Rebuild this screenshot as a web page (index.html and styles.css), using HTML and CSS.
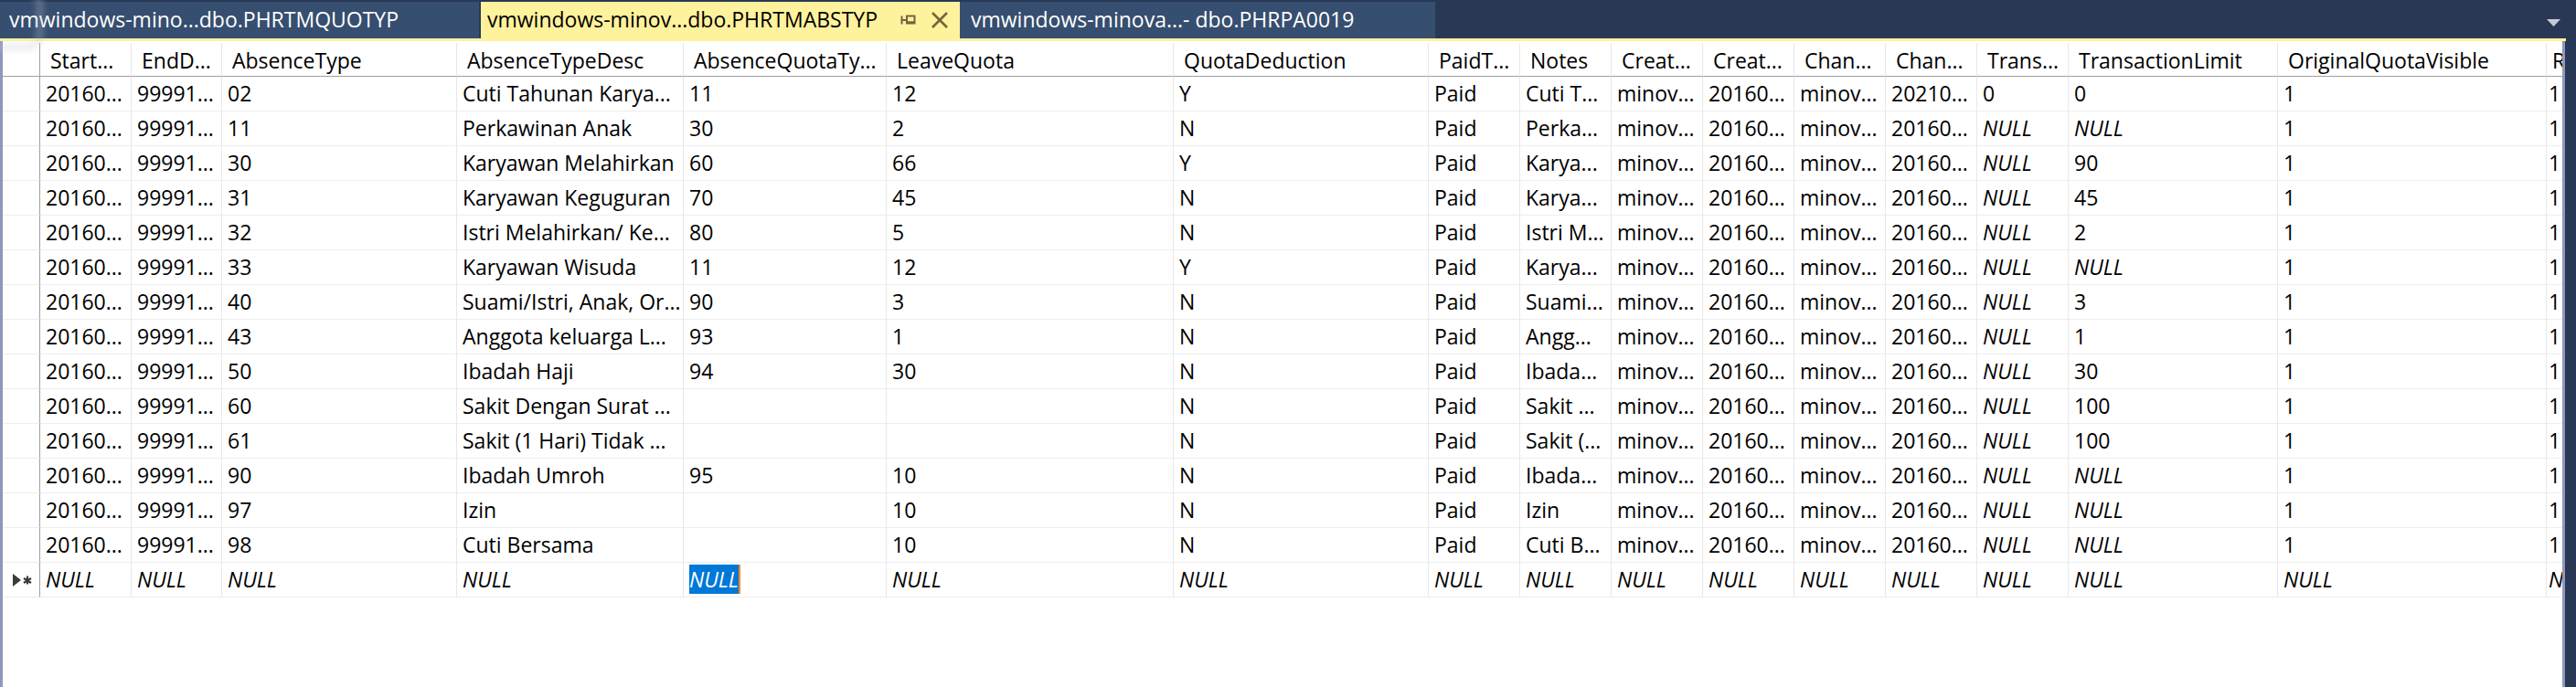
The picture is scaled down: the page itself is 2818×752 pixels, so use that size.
FILE: index.html
```html
<!DOCTYPE html>
<html>
<head>
<meta charset="utf-8">
<link rel="stylesheet" href="styles.css">
</head>
<body>
<div class="app">
  <div class="ghost"></div>
  <div class="tabbar">
    <div class="tab tab1">vmwindows-mino...dbo.PHRTMQUOTYP</div>
    <div class="tab tab2"><span class="tab-title">vmwindows-minov...dbo.PHRTMABSTYP</span>
      <svg class="pin" width="18" height="12" viewBox="0 0 18 12"><path d="M1.5 1.5v9M1.5 6h5.5M7 1.5h8.5v8H7z" fill="none" stroke="#74643e" stroke-width="2"/><path d="M7 8.5h9" stroke="#74643e" stroke-width="2.5"/></svg>
      <svg class="close" width="20" height="18" viewBox="0 0 20 18"><path d="M2 1l16 16M18 1L2 17" stroke="#74643e" stroke-width="2.6"/></svg>
    </div>
    <div class="tab tab3">vmwindows-minova...- dbo.PHRPA0019</div>
    <div class="spacer"></div>
    <svg class="dropdown" width="15" height="8" viewBox="0 0 15 8"><path d="M0 0h15L7.5 8z" fill="#c7cbd9"/></svg>
  </div>
  <div class="accent"></div>
  <div class="content">
    <div class="lframe"></div>
    <div class="grid">
      <div class="row head">
        <span class="sel"></span><span>Start...</span><span>EndD...</span><span>AbsenceType</span><span>AbsenceTypeDesc</span><span>AbsenceQuotaTy...</span><span>LeaveQuota</span><span>QuotaDeduction</span><span>PaidT...</span><span>Notes</span><span>Creat...</span><span>Creat...</span><span>Chan...</span><span>Chan...</span><span>Trans...</span><span>TransactionLimit</span><span>OriginalQuotaVisible</span><span class="cut">R</span>
      </div>
      <div class="row">
        <span class="sel"></span><span>20160...</span><span>99991...</span><span>02</span><span>Cuti Tahunan Karya...</span><span>11</span><span>12</span><span>Y</span><span>Paid</span><span>Cuti T...</span><span>minov...</span><span>20160...</span><span>minov...</span><span>20210...</span><span>0</span><span>0</span><span>1</span><span class="cut">1</span>
      </div>
      <div class="row">
        <span class="sel"></span><span>20160...</span><span>99991...</span><span>11</span><span>Perkawinan Anak</span><span>30</span><span>2</span><span>N</span><span>Paid</span><span>Perka...</span><span>minov...</span><span>20160...</span><span>minov...</span><span>20160...</span><span class="null">NULL</span><span class="null">NULL</span><span>1</span><span class="cut">1</span>
      </div>
      <div class="row">
        <span class="sel"></span><span>20160...</span><span>99991...</span><span>30</span><span>Karyawan Melahirkan</span><span>60</span><span>66</span><span>Y</span><span>Paid</span><span>Karya...</span><span>minov...</span><span>20160...</span><span>minov...</span><span>20160...</span><span class="null">NULL</span><span>90</span><span>1</span><span class="cut">1</span>
      </div>
      <div class="row">
        <span class="sel"></span><span>20160...</span><span>99991...</span><span>31</span><span>Karyawan Keguguran</span><span>70</span><span>45</span><span>N</span><span>Paid</span><span>Karya...</span><span>minov...</span><span>20160...</span><span>minov...</span><span>20160...</span><span class="null">NULL</span><span>45</span><span>1</span><span class="cut">1</span>
      </div>
      <div class="row">
        <span class="sel"></span><span>20160...</span><span>99991...</span><span>32</span><span>Istri Melahirkan/ Ke...</span><span>80</span><span>5</span><span>N</span><span>Paid</span><span>Istri M...</span><span>minov...</span><span>20160...</span><span>minov...</span><span>20160...</span><span class="null">NULL</span><span>2</span><span>1</span><span class="cut">1</span>
      </div>
      <div class="row">
        <span class="sel"></span><span>20160...</span><span>99991...</span><span>33</span><span>Karyawan Wisuda</span><span>11</span><span>12</span><span>Y</span><span>Paid</span><span>Karya...</span><span>minov...</span><span>20160...</span><span>minov...</span><span>20160...</span><span class="null">NULL</span><span class="null">NULL</span><span>1</span><span class="cut">1</span>
      </div>
      <div class="row">
        <span class="sel"></span><span>20160...</span><span>99991...</span><span>40</span><span>Suami/Istri, Anak, Or...</span><span>90</span><span>3</span><span>N</span><span>Paid</span><span>Suami...</span><span>minov...</span><span>20160...</span><span>minov...</span><span>20160...</span><span class="null">NULL</span><span>3</span><span>1</span><span class="cut">1</span>
      </div>
      <div class="row">
        <span class="sel"></span><span>20160...</span><span>99991...</span><span>43</span><span>Anggota keluarga L...</span><span>93</span><span>1</span><span>N</span><span>Paid</span><span>Angg...</span><span>minov...</span><span>20160...</span><span>minov...</span><span>20160...</span><span class="null">NULL</span><span>1</span><span>1</span><span class="cut">1</span>
      </div>
      <div class="row">
        <span class="sel"></span><span>20160...</span><span>99991...</span><span>50</span><span>Ibadah Haji</span><span>94</span><span>30</span><span>N</span><span>Paid</span><span>Ibada...</span><span>minov...</span><span>20160...</span><span>minov...</span><span>20160...</span><span class="null">NULL</span><span>30</span><span>1</span><span class="cut">1</span>
      </div>
      <div class="row">
        <span class="sel"></span><span>20160...</span><span>99991...</span><span>60</span><span>Sakit Dengan Surat ...</span><span></span><span></span><span>N</span><span>Paid</span><span>Sakit ...</span><span>minov...</span><span>20160...</span><span>minov...</span><span>20160...</span><span class="null">NULL</span><span>100</span><span>1</span><span class="cut">1</span>
      </div>
      <div class="row">
        <span class="sel"></span><span>20160...</span><span>99991...</span><span>61</span><span>Sakit (1 Hari) Tidak ...</span><span></span><span></span><span>N</span><span>Paid</span><span>Sakit (...</span><span>minov...</span><span>20160...</span><span>minov...</span><span>20160...</span><span class="null">NULL</span><span>100</span><span>1</span><span class="cut">1</span>
      </div>
      <div class="row">
        <span class="sel"></span><span>20160...</span><span>99991...</span><span>90</span><span>Ibadah Umroh</span><span>95</span><span>10</span><span>N</span><span>Paid</span><span>Ibada...</span><span>minov...</span><span>20160...</span><span>minov...</span><span>20160...</span><span class="null">NULL</span><span class="null">NULL</span><span>1</span><span class="cut">1</span>
      </div>
      <div class="row">
        <span class="sel"></span><span>20160...</span><span>99991...</span><span>97</span><span>Izin</span><span></span><span>10</span><span>N</span><span>Paid</span><span>Izin</span><span>minov...</span><span>20160...</span><span>minov...</span><span>20160...</span><span class="null">NULL</span><span class="null">NULL</span><span>1</span><span class="cut">1</span>
      </div>
      <div class="row">
        <span class="sel"></span><span>20160...</span><span>99991...</span><span>98</span><span>Cuti Bersama</span><span></span><span>10</span><span>N</span><span>Paid</span><span>Cuti B...</span><span>minov...</span><span>20160...</span><span>minov...</span><span>20160...</span><span class="null">NULL</span><span class="null">NULL</span><span>1</span><span class="cut">1</span>
      </div>
      <div class="row newrow">
        <span class="sel"><svg width="24" height="16" viewBox="0 0 24 16"><path d="M1 1l9 7-9 7z" fill="#3c3c3c"/><path d="M17 3.5v9M13 6l8 5M21 6l-8 5" stroke="#3c3c3c" stroke-width="2.2"/></svg></span><span class="null">NULL</span><span class="null">NULL</span><span class="null">NULL</span><span class="null">NULL</span><span class="null"><em class="picked">NULL</em></span><span class="null">NULL</span><span class="null">NULL</span><span class="null">NULL</span><span class="null">NULL</span><span class="null">NULL</span><span class="null">NULL</span><span class="null">NULL</span><span class="null">NULL</span><span class="null">NULL</span><span class="null">NULL</span><span class="null">NULL</span><span class="null cut">N</span>
      </div>
    </div>
    <div class="rframe"></div>
    <div class="rdark"></div>
  </div>
</div>
</body>
</html>
```
FILE: styles.css
```css
* { box-sizing: border-box; }
html, body { margin: 0; padding: 0; }
body {
  width: 2818px;
  height: 752px;
  overflow: hidden;
  background: #293955;
  font-family: "Open Sans", "Noto Sans", sans-serif;
  font-size: 23px;
  color: #000;
}
.app {
  position: relative;
  display: flex;
  flex-direction: column;
  height: 752px;
}
.ghost {
  position: absolute;
  left: -18px;
  top: -14px;
  width: 66px;
  height: 70px;
  border-radius: 18px;
  border: 9px solid rgba(190, 196, 212, 0.28);
  filter: blur(3px);
  pointer-events: none;
  z-index: 5;
}
.tabbar {
  height: 42px;
  display: flex;
  align-items: flex-end;
  padding-right: 17px;
}
.tab {
  height: 40px;
  display: flex;
  align-items: center;
  white-space: nowrap;
  color: #fff;
  background: #364e6f;
  font-size: 23px;
  padding-bottom: 2px;
}
.tab1 { width: 524px; margin-right: 2px; padding-left: 10px; }
.tab2 { width: 524px; background: #fff29d; color: #000; padding-left: 7px; }
.tab3 { width: 520px; padding-left: 12px; }
.tab-title { width: 448px; overflow: hidden; }
.pin { margin-left: 4px; margin-top: 2px; }
.close { margin-left: 15px; margin-top: 2px; }
.spacer { flex: 1; }
.dropdown { margin-bottom: 13px; }
.accent {
  height: 3px;
  width: 2807px;
  background: #fff29d;
}
.content {
  flex: 1;
  display: flex;
  min-height: 0;
}
.lframe { width: 3px; background: #8e98bb; }
.rframe { width: 3px; background: #8e98bb; }
.rdark { flex: 1; background: #293955; }
.grid {
  width: 2800px;
  background: #fff;
  overflow: hidden;
  padding-top: 2px;
}
.row {
  display: grid;
  grid-template-columns: 41px 100px 99px 257px 248px 222px 314px 279px 100px 100px 100px 100px 100px 100px 100px 229px 294px 17px;
  height: 38px;
  width: 2800px;
}
.row > span {
  display: block;
  height: 100%;
  border-right: 1px solid #e8e8e8;
  border-bottom: 1px solid #ededed;
  padding-left: 6px;
  line-height: 37px;
  white-space: nowrap;
  overflow: hidden;
}
.row > span.sel {
  border-right-color: #a0a0a0;
  padding-left: 0;
  display: flex;
  align-items: center;
  justify-content: center;
}
.row > span.cut {
  border-right: none;
  padding-left: 2px;
  text-overflow: clip;
}
.head { height: 37px; }
.head > span {
  border-bottom-color: #a0a0a0;
  padding-left: 11px;
  line-height: 34px;
  padding-top: 2px;
}
.head > span.cut { padding-left: 6px; }
.null { font-style: italic; }
.picked {
  font-style: italic;
  background: #0078d7;
  color: #fff;
  display: inline-block;
  line-height: 32px;
  border-right: 2px solid #f28c28;
}
.newrow .sel svg { margin-left: 4px; }
```
